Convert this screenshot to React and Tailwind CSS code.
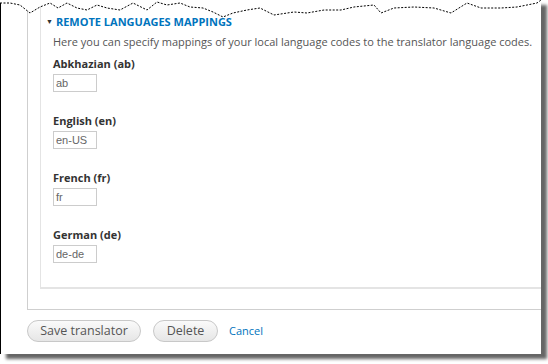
const tear = [
  [0, 3], [10, 3], [20, 5], [30, 13], [40, 7], [50, 3], [58, 8], [67, 3], [77, 8], [87, 10],
  [97, 5], [107, 8], [120, 10], [133, 3], [147, 10], [157, 2], [167, 5], [180, 3], [190, 7],
  [203, 8], [213, 12], [223, 17], [233, 13], [247, 10], [260, 8], [274, 15], [294, 12],
  [307, 13], [324, 10], [341, 10], [354, 7], [374, 5], [381, 13], [394, 8], [414, 7],
  [434, 8], [451, 13], [467, 3], [481, 8], [501, 8], [517, 7], [537, 3], [541, 0],
];

const TornEdge = () => {
  const line = tear.map(([x, y]) => `${x},${y}`).join(" ");
  return (
    <svg className="absolute left-[-1px] top-0" width="560" height="30" viewBox="0 0 560 30">
      <polygon points={`0,0 ${line} 560,0`} fill="#fff" />
      <polyline points={line} fill="none" stroke="#000" strokeWidth="1" strokeDasharray="2 1.5" />
    </svg>
  );
};

const mappings = [
  { label: "Abkhazian (ab)", value: "ab" },
  { label: "English (en)", value: "en-US" },
  { label: "French (fr)", value: "fr" },
  { label: "German (de)", value: "de-de" },
];

export default function App() {
  return (
    <div className="w-[548px] h-[364px] bg-white overflow-hidden font-['Open_Sans',sans-serif]">
      <div className="relative w-[541px] h-[354px] bg-white border-l border-black shadow-[6px_5px_3px_rgba(0,0,0,0.6)]">
        <div className="ml-[26px] h-[310px] border-l border-b border-[#cfcfcf]">
          <div className="ml-[12px] h-[289px] border-l border-b-2 border-[#e4e4e4] pl-[12px] pt-[14px]">
            <div className="flex items-center h-[14px] -ml-[7px] gap-[3px]">
              <span className="text-[7px] text-[#333] leading-none">▼</span>
              <span className="text-[11px] font-bold uppercase text-[#0074bd] leading-none">Remote languages mappings</span>
            </div>
            <p className="mt-[7px] text-[11px] leading-[14px] text-[#555]">
              Here you can specify mappings of your local language codes to the translator language codes.
            </p>
            <div className="mt-[8px] flex flex-col gap-[22px]">
              {mappings.map((m) => (
                <div key={m.value}>
                  <div className="text-[11px] font-bold leading-[14px] text-[#333]">{m.label}</div>
                  <div className="mt-[3px] w-[44px] h-[18px] border border-[#ccc] px-[2px] pt-[1px] text-[11px] leading-[15px] text-[#666] font-['Liberation_Sans',sans-serif]">
                    {m.value}
                  </div>
                </div>
              ))}
            </div>
          </div>
        </div>
        <div className="mt-[10px] ml-[26px] flex items-center">
          <button className="w-[114px] h-[22px] rounded-full border border-[#c8c8c8] bg-gradient-to-b from-[#fafafa] to-[#e6e6e6] text-[12.5px] text-[#555]">
            Save translator
          </button>
          <button className="ml-[12px] w-[65px] h-[22px] rounded-full border border-[#c8c8c8] bg-gradient-to-b from-[#fafafa] to-[#e6e6e6] text-[12.5px] text-[#555]">
            Delete
          </button>
          <a className="ml-[11px] text-[11px] text-[#0074bd]">Cancel</a>
        </div>
        <TornEdge />
      </div>
    </div>
  );
}
